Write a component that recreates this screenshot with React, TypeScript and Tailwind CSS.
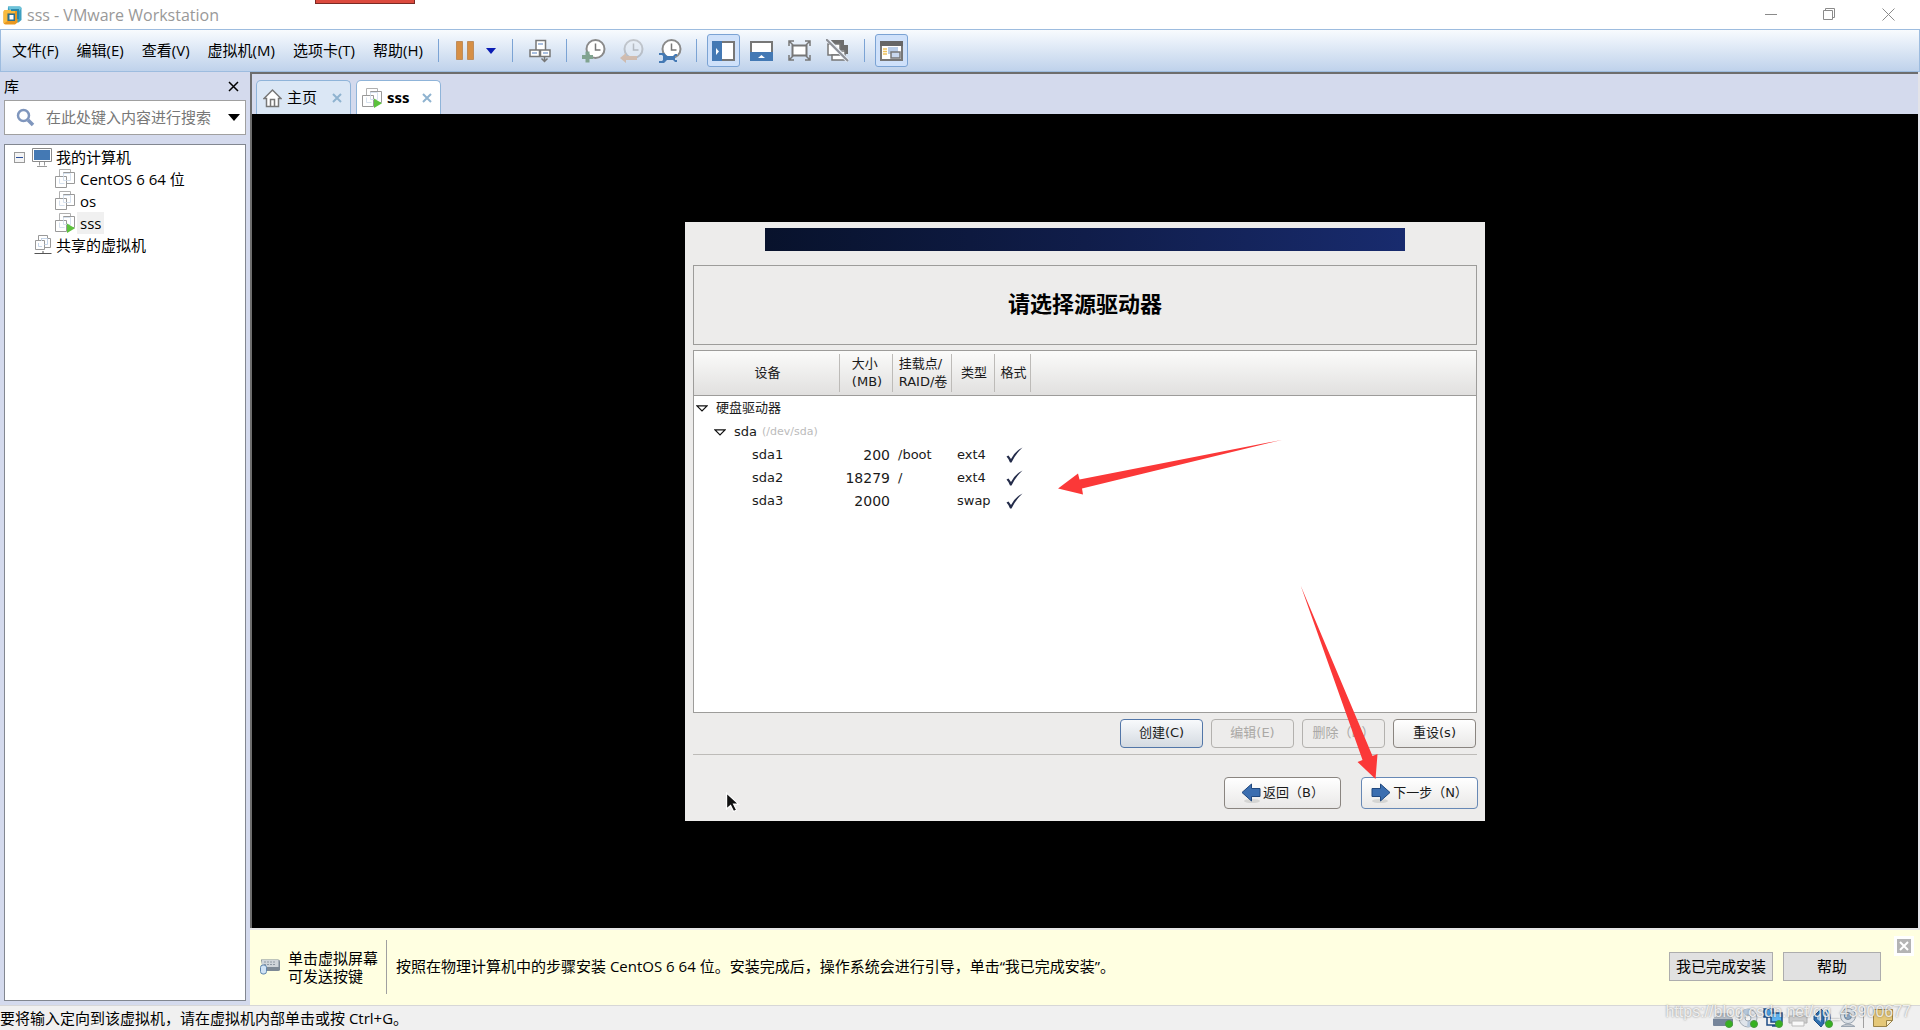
import type { ReactNode } from "react"
import clsx from "clsx"

/* ------------------------------------------------------------------ */
/*  Data                                                                */
/* ------------------------------------------------------------------ */

const menus = ["文件(F)", "编辑(E)", "查看(V)", "虚拟机(M)", "选项卡(T)", "帮助(H)"]

type Partition = { name: string; size: string; mount: string; type: string }

const partitions: Partition[] = [
  { name: "sda1", size: "200", mount: "/boot", type: "ext4" },
  { name: "sda2", size: "18279", mount: "/", type: "ext4" },
  { name: "sda3", size: "2000", mount: "", type: "swap" },
]

/* ------------------------------------------------------------------ */
/*  Window icons                                                        */
/* ------------------------------------------------------------------ */

function AppLogo() {
  return (
    <svg width="19" height="20" viewBox="0 0 19 20" aria-hidden="true">
      <path d="M5 1.500h11.500q2 0 2 2V15l-3 2.500H8L4.500 14z" fill="#3d9fc0" />
      <path d="M5 1.500h11.500q2 0 2 2L16 6H7z" fill="#6cc3da" />
      <path d="M2.500 5H13q1.500 0 1.500 1.500V17.500L12 19.500H2.500Q.5 19.500.5 17.500V7q0-2 2-2z" fill="#e9971f" />
      <path d="M2.500 5H12v3.500H4.500V16L1 18.500q-.5-.5-.5-1V7q0-2 2-2z" fill="#f9bb3f" />
      <path d="M4.500 8.500h7.500v7.500H4.500z" fill="#2d6f8e" />
      <path d="M6.500 10h4v4.500h-4z" fill="#fff" />
      <path d="M8 4h8v10h-2V6H8z" fill="#2b87ab" />
    </svg>
  )
}

function VmIcon({ running = false }: { running?: boolean }) {
  return (
    <svg width="21" height="20" viewBox="0 0 21 20" aria-hidden="true">
      <g fill="#fff" strokeWidth="1">
        <path d="M4.500.5h11v11h-11z" stroke="#b0b0b0" />
        <path d="M8.500 3.500h11v11h-11z" stroke="#999" />
        <path d="M.5 7.500h11v11H.5z" stroke="#999" />
      </g>
      <path d="M8.500 7.500v-3h7v7h-4M4.500 9.500v5h5M8.500 7.500v4h3" fill="none" stroke="#d6e1ee" />
      {running && <path d="M12 10.500v9.500l8-4.700z" fill="#5cc23c" />}
    </svg>
  )
}

function SharedIcon() {
  return (
    <svg width="18" height="20" viewBox="0 0 18 20" aria-hidden="true">
      <g fill="#fff" stroke="#999">
        <path d="M4.500.5h9v9h-9z" />
        <path d="M7.500 3.500h9v9h-9z" />
        <path d="M1.500 5.500h9v9h-9z" />
      </g>
      <path d="M7.500 6V3.500h6v6h-3M4.500 8v3.500H8" fill="none" stroke="#c6d6ea" />
      <path d="M.5 18.500h17M9 16v2.500" stroke="#555" />
    </svg>
  )
}

function ComputerIcon() {
  return (
    <svg width="20" height="19" viewBox="0 0 20 19" aria-hidden="true">
      <path d="M.5.5h19v13H.5z" fill="#fff" stroke="#8a8a8a" />
      <path d="M2 2h16v10H2z" fill="#4479b4" />
      <path d="M7.500 14v3.500M12.500 14v3.500M5 18.500h10" stroke="#999" fill="none" />
    </svg>
  )
}

function HomeIcon() {
  return (
    <svg width="19" height="20" viewBox="0 0 19 20" aria-hidden="true">
      <path d="M1 10.500 9.500 2l8.500 8.500h-2.500V18.500h-12V10.500z" fill="#fff" stroke="#777" strokeWidth="1.500" />
      <path d="M7.500 18v-6.500h4V18" fill="none" stroke="#777" strokeWidth="1.500" />
    </svg>
  )
}

function Clock({ children, faded = false }: { children: ReactNode; faded?: boolean }) {
  return (
    <svg width="24" height="24" viewBox="0 0 24 24" aria-hidden="true" opacity={faded ? 0.4 : 1}>
      <circle cx="13.500" cy="10" r="9" fill={faded ? "#e8edf3" : "#fff"} stroke="#8a8a8a" strokeWidth="2" />
      <path d="M13.500 4.500v6.500h5" fill="none" stroke="#777" strokeWidth="1.500" />
      {children}
    </svg>
  )
}

function PauseIcon() {
  return (
    <svg width="18" height="20" viewBox="0 0 18 20" aria-hidden="true">
      <path d="M.5.5h6v18h-6zM11.500.5h6v18h-6z" fill="#d68f45" stroke="#bf8d5c" />
    </svg>
  )
}

function SendKeysIcon() {
  return (
    <svg width="22" height="24" viewBox="0 0 22 24" aria-hidden="true">
      <g fill="#fff" stroke="#777" strokeWidth="1.500">
        <path d="M7 1.500h9.500V11H7zM1 11h9.500v6.500H1zM11.500 11H21v6.500h-9.500z" />
      </g>
      <path d="M9 5h5M3 14h5M14 14h5" stroke="#a9bfe0" strokeWidth="2" />
      <path d="M15.500 17.500v5M12.500 19.500l3 3 3-3" fill="none" stroke="#777" strokeWidth="1.500" />
    </svg>
  )
}

function LibraryViewIcon() {
  return (
    <svg width="23" height="20" viewBox="0 0 23 20" aria-hidden="true">
      <path d="M1 1h21v18H1z" fill="#fff" stroke="#777" strokeWidth="2" />
      <path d="M0 0h10v20H0z" fill="#4479b4" />
      <path d="M4 7v7l3-3.500z" fill="#fff" />
    </svg>
  )
}

function ThumbnailViewIcon() {
  return (
    <svg width="23" height="20" viewBox="0 0 23 20" aria-hidden="true">
      <path d="M1 1h21v18H1z" fill="#fff" stroke="#777" strokeWidth="2" />
      <path d="M0 11h23v9H0z" fill="#4479b4" />
      <path d="M8 17h7l-3.500-3z" fill="#fff" />
    </svg>
  )
}

function FullscreenIcon() {
  return (
    <svg width="23" height="21" viewBox="0 0 23 21" aria-hidden="true">
      <path d="M4.500 5.500h14v10h-14z" fill="#fff" stroke="#777" strokeWidth="2" />
      <path
        d="M1 6V1h5M1 1l4 4M17 1h5v5M22 1l-4 4M1 15v5h5M1 20l4-4M22 15v5h-5M22 20l-4-4"
        fill="none"
        stroke="#777"
        strokeWidth="1.500"
      />
    </svg>
  )
}

function UnityIcon() {
  return (
    <svg width="23" height="23" viewBox="0 0 23 23" aria-hidden="true">
      <path d="M5 1h13v5h4v9h-4v-4H5z" fill="#6d6d6d" />
      <path d="M2 5h12v11H2z" fill="#fff" stroke="#777" strokeWidth="1.500" />
      <path d="M6 16v5h13v-9h-4v4z" fill="#fff" stroke="#777" strokeWidth="1.500" />
      <path d="M1 0 22 22" stroke="#e8eef6" strokeWidth="4" />
      <path d="M0 0 22 22" stroke="#8c8f96" strokeWidth="2" />
    </svg>
  )
}

function ConsoleIcon() {
  return (
    <svg width="23" height="20" viewBox="0 0 23 20" aria-hidden="true">
      <path d="M1 1h21v18H1z" fill="#fff" stroke="#777" strokeWidth="2" />
      <path d="M0 0h23v5H0z" fill="#666" />
      <path d="M3 8h4M3 10.500h4M3 13h4" stroke="#efc25c" strokeWidth="1.500" />
      <path d="M8 6h10v7H8z" fill="#b9cde8" />
      <path d="M11 11h9v6h-9z" fill="#c9d8ee" stroke="#777" strokeWidth="1.500" />
    </svg>
  )
}

function CloseGlyph({ className }: { className: string }) {
  return (
    <svg width="10" height="10" viewBox="0 0 10 10" className={className} aria-hidden="true">
      <path d="m1 1 8 8M9 1 1 9" stroke="currentColor" strokeWidth="2" fill="none" />
    </svg>
  )
}

function KeyboardIcon() {
  return (
    <svg width="21" height="17" viewBox="0 0 21 17" aria-hidden="true">
      <path d="M1 1.500h17q2 0 2 2v8q0 1.500-2 1.500H3z" fill="#7d8995" />
      <path d="M2 2h16.500v7H2z" fill="#cfd5da" />
      <path d="M4 4h12M4 6.500h12" stroke="#8f99a3" strokeDasharray="2 1" />
      <rect x=".5" y="7" width="6" height="9" rx="2.500" fill="#cfe2f5" stroke="#5f86ad" />
    </svg>
  )
}

/* ------------------------------------------------------------------ */
/*  Title bar, menus and toolbar                                        */
/* ------------------------------------------------------------------ */

function TitleBar() {
  return (
    <header className="relative flex h-[29px] items-center bg-white pl-[3px]">
      <AppLogo />
      <h1 className="pl-[5px] text-[16px]/[20px] text-[#999]">sss - VMware Workstation</h1>
      <div className="absolute left-[315px] top-0 h-1 w-[100px] border border-t-0 border-[#7b2a24] bg-[#dc4a3e]" />
      <div className="ml-auto flex text-[#8a8a8a]">
        <button type="button" aria-label="最小化" className="flex h-7 w-[62px] items-center justify-center">
          <svg width="12" height="12" aria-hidden="true">
            <path d="M0 5.500h12" stroke="currentColor" />
          </svg>
        </button>
        <button type="button" aria-label="还原" className="flex h-7 w-[54px] items-center justify-center">
          <svg width="13" height="13" fill="none" aria-hidden="true">
            <path d="M.5 2.500h9v9h-9zM2.500 2.500v-2h9v9h-2" stroke="currentColor" />
          </svg>
        </button>
        <button type="button" aria-label="关闭" className="flex h-7 w-[64px] items-center justify-center">
          <svg width="13" height="13" aria-hidden="true">
            <path d="m.5.5 12 12M12.500.5l-12 12" stroke="currentColor" />
          </svg>
        </button>
      </div>
    </header>
  )
}

function Separator() {
  return <span className="h-[23px] w-px shrink-0 bg-[#7ba3d4]" />
}

function ToolButton({ label, pressed = false, children }: { label: string; pressed?: boolean; children: ReactNode }) {
  return (
    <button
      type="button"
      aria-label={label}
      aria-pressed={pressed}
      className={clsx(
        "flex h-[33px] w-[33px] shrink-0 items-center justify-center rounded-[3px]",
        pressed && "border border-[#7ba3d4] bg-[#cfe1fa]",
      )}
    >
      {children}
    </button>
  )
}

function Toolbar() {
  return (
    <div className="flex h-[43px] items-center border border-[#9dbcdf] bg-linear-to-b from-[#f8fbfe] to-[#bfd2eb]">
      <nav className="flex w-[437px] shrink-0 gap-[18px] pl-[11px]">
        {menus.map((m) => (
          <button key={m} type="button" className="shrink-0 text-[15px] whitespace-nowrap">
            {m}
          </button>
        ))}
      </nav>
      <Separator />
      <div className="flex w-[73px] items-center justify-end gap-3 pr-4">
        <button type="button" aria-label="挂起">
          <PauseIcon />
        </button>
        <button type="button" aria-label="电源选项">
          <svg width="10" height="6" aria-hidden="true">
            <path d="M0 0h10L5 6z" fill="#0a1cb4" />
          </svg>
        </button>
      </div>
      <Separator />
      <div className="flex w-[53px] justify-center">
        <ToolButton label="发送 Ctrl+Alt+Del">
          <SendKeysIcon />
        </ToolButton>
      </div>
      <Separator />
      <div className="flex w-[129px] items-center justify-center gap-[5px]">
        <ToolButton label="拍摄快照">
          <Clock>
            <path d="M5.500 12.500v11M0 18h11" stroke="#80a390" strokeWidth="4" />
          </Clock>
        </ToolButton>
        <ToolButton label="恢复快照">
          <Clock faded>
            <path d="M0 19l6-5v3h11v4H6v3z" fill="#d08a50" />
          </Clock>
        </ToolButton>
        <ToolButton label="管理快照">
          <Clock>
            <path d="M1 14h5l3 3h6l2-2h2v2h-2v4h2v2h-2l-2-2H9l-3 3H1v-2h3l1-1v-4l-1-1H1z" fill="#4479b4" />
          </Clock>
        </ToolButton>
      </div>
      <Separator />
      <div className="flex w-[167px] items-center justify-center gap-[5px]">
        <ToolButton label="显示库" pressed>
          <LibraryViewIcon />
        </ToolButton>
        <ToolButton label="显示缩略图栏">
          <ThumbnailViewIcon />
        </ToolButton>
        <ToolButton label="全屏">
          <FullscreenIcon />
        </ToolButton>
        <ToolButton label="Unity">
          <UnityIcon />
        </ToolButton>
      </div>
      <Separator />
      <div className="pl-2.5">
        <ToolButton label="控制台视图" pressed>
          <ConsoleIcon />
        </ToolButton>
      </div>
    </div>
  )
}

/* ------------------------------------------------------------------ */
/*  Library sidebar                                                     */
/* ------------------------------------------------------------------ */

function Library() {
  return (
    <aside className="flex w-[250px] shrink-0 flex-col pb-1 pl-1 pr-1">
      <div className="flex h-7 items-center justify-between pr-[7px]">
        <h2 className="text-[15px]">库</h2>
        <button type="button" aria-label="关闭库">
          <svg width="11" height="11" aria-hidden="true">
            <path d="m1 1 9 9M10 1l-9 9" stroke="#000" strokeWidth="1.500" />
          </svg>
        </button>
      </div>
      <div className="flex h-[35px] items-center border border-[#a0a0a0] bg-white pl-[11px] pr-[5px]">
        <svg width="19" height="19" viewBox="0 0 19 19" aria-hidden="true">
          <circle cx="7.500" cy="7.500" r="5.500" fill="none" stroke="#7f96bd" strokeWidth="2.500" />
          <path d="m12 12 5 5" stroke="#7f96bd" strokeWidth="3.500" />
        </svg>
        <input
          type="search"
          aria-label="搜索库"
          placeholder="在此处键入内容进行搜索"
          className="min-w-0 flex-1 pl-[11px] text-[15px] outline-none placeholder:text-[#777]"
        />
        <button type="button" aria-label="搜索选项">
          <svg width="12" height="7" aria-hidden="true">
            <path d="M0 0h12L6 7z" />
          </svg>
        </button>
      </div>
      <ul className="mt-[9px] flex-1 border border-[#828790] bg-white py-px text-[15px] leading-[22px]">
        <li>
          <div className="flex items-center pl-[9px]">
            <button
              type="button"
              aria-label="折叠"
              className="mr-[7px] flex h-[11px] w-[11px] items-center justify-center border border-[#999] bg-[#f4f4f4]"
            >
              <span className="h-px w-[7px] bg-[#2b4f9c]" />
            </button>
            <ComputerIcon />
            <span className="pl-1">我的计算机</span>
          </div>
          <ul>
            {["CentOS 6 64 位", "os", "sss"].map((name) => (
              <li key={name} className="flex items-center pl-[50px]">
                <VmIcon running={name === "sss"} />
                <span className={clsx("ml-px px-[3px]", name === "sss" && "bg-[#f0f0f0]")}>{name}</span>
              </li>
            ))}
          </ul>
        </li>
        <li className="flex items-center pl-[29px]">
          <SharedIcon />
          <span className="pl-1">共享的虚拟机</span>
        </li>
      </ul>
    </aside>
  )
}

/* ------------------------------------------------------------------ */
/*  Installer running inside the VM                                     */
/* ------------------------------------------------------------------ */

function Expander() {
  return (
    <svg width="12" height="7" viewBox="0 0 12 7" className="shrink-0" aria-hidden="true">
      <path d="M1 .8h10L6 6z" fill="#fff" stroke="#111" strokeWidth="1.200" />
    </svg>
  )
}

function Check() {
  return (
    <svg width="17" height="16" viewBox="0 0 17 16" aria-hidden="true">
      <path d="M.5 9.500 2.500 8.500 5 12Q9 4 16.500.5 9.500 7 5.500 15.500H4Q2.500 11.500.5 9.500z" fill="#242c4a" />
    </svg>
  )
}

function NavArrow({ back = false }: { back?: boolean }) {
  return (
    <svg width="20" height="20" viewBox="0 0 20 20" className={clsx(back && "-scale-x-100")} aria-hidden="true">
      <ellipse cx="9" cy="18" rx="8" ry="2" fill="#d5d5d3" />
      <path d="M1 5.500h8.500V1L19 9.500 9.500 18v-4.500H1z" fill="#3b6eb0" stroke="#20487e" />
    </svg>
  )
}

function GtkButton({ tone = "plain", children }: { tone?: "plain" | "focus" | "off"; children: ReactNode }) {
  return (
    <button
      type="button"
      disabled={tone === "off"}
      className={clsx(
        "h-[29px] w-[83px] rounded-[4px] border whitespace-nowrap",
        tone === "plain" && "border-[#8a8580] bg-linear-to-b from-white to-[#e9e8e7]",
        tone === "focus" && "border-[#5276a8] bg-linear-to-b from-[#f8fafc] to-[#d4dae1]",
        tone === "off" && "border-[#b3b1ae] bg-[#edeceb] text-[#aaa8a5]",
      )}
    >
      {children}
    </button>
  )
}

function HeaderCell({ children, className }: { children: ReactNode; className: string }) {
  return (
    <th scope="col" className={clsx("h-[45px] p-0 font-normal", className)}>
      <div className="flex h-[38px] items-center justify-center border-r border-[#bdbbb8] pl-0.5 text-left leading-[18px]">
        {children}
      </div>
    </th>
  )
}

function PartitionTable() {
  return (
    <div className="mt-[5px] h-[363px] border border-[#9d9c9a] bg-white">
      <table className="w-full table-fixed border-collapse">
        <thead className="border-b border-[#9d9c9a] bg-linear-to-b from-[#fbfbfa] to-[#e1e0df]">
          <tr>
            <HeaderCell className="w-[146px]">设备</HeaderCell>
            <HeaderCell className="w-[53px]">
              大小
              <br />
              (MB)
            </HeaderCell>
            <HeaderCell className="w-[59px]">
              挂载点/
              <br />
              RAID/卷
            </HeaderCell>
            <HeaderCell className="w-[43px]">类型</HeaderCell>
            <HeaderCell className="w-[36px]">格式</HeaderCell>
            <td />
          </tr>
        </thead>
        <tbody>
          <tr className="h-[25px]">
            <td colSpan={6} className="p-0">
              <div className="flex items-center gap-2 pl-0.5">
                <Expander />
                硬盘驱动器
              </div>
            </td>
          </tr>
          <tr className="h-[23px]">
            <td colSpan={6} className="p-0">
              <div className="flex items-center pl-5">
                <Expander />
                <span className="pl-2">sda</span>
                <span className="pl-[5px] text-[11px] text-[#bbb]">(/dev/sda)</span>
              </div>
            </td>
          </tr>
          {partitions.map((p) => (
            <tr key={p.name} className="h-[23px]">
              <td className="p-0 pl-[58px]">{p.name}</td>
              <td className="p-0 pr-[3px] text-right text-[14px] leading-5">{p.size}</td>
              <td className="p-0 pl-[5px]">{p.mount}</td>
              <td className="p-0 pl-[5px]">{p.type}</td>
              <td className="p-0 pl-[11px]">
                <Check />
              </td>
              <td />
            </tr>
          ))}
        </tbody>
      </table>
    </div>
  )
}

/* Red pointer arrows and the guest cursor, over the installer */
function Annotations() {
  return (
    <svg viewBox="0 0 800 600" className="pointer-events-none absolute inset-0 h-full w-full" aria-hidden="true">
      <path d="M373 267 393 252 394.500 258 598 218 397 267 398 273z" fill="#fb3838" />
      <path d="M616 364 688 535 693 533 691 558 673 541 678 539z" fill="#fb3838" />
      <path
        d="M41 572v16l4-3.500 3 6 3-1.500-3-6h5z"
        fill="#111"
        stroke="#fff"
        strokeWidth="1.200"
      />
    </svg>
  )
}

function Installer() {
  return (
    <section className="relative w-[800px] bg-[#edeceb] px-2 pt-1.5 pb-3 font-['DejaVu_Sans','Noto_Sans_CJK_SC',sans-serif] text-[13px] leading-5 text-[#1a1a1a]">
      <div className="mx-auto h-[23px] w-[640px] bg-linear-to-r from-[#08122c] via-[#101d4a] to-[#182b6e]" />
      <div className="mt-3.5 flex h-[80px] items-center justify-center border border-[#9d9c9a]">
        <h2 className="text-[22px] font-bold text-black">请选择源驱动器</h2>
      </div>
      <PartitionTable />
      <div className="mt-1.5 flex justify-end gap-2 border-b border-[#bdbbb8] pb-1.5 pr-px">
        <GtkButton tone="focus">创建(C)</GtkButton>
        <GtkButton tone="off">编辑(E)</GtkButton>
        <GtkButton tone="off">删除（D）</GtkButton>
        <GtkButton>重设(s)</GtkButton>
      </div>
      <div className="mt-[22px] -mr-px flex justify-end gap-5">
        <button
          type="button"
          className="flex h-8 w-[117px] items-center justify-center gap-0.5 rounded-[4px] border border-[#8a8580] bg-linear-to-b from-white to-[#e9e8e7] whitespace-nowrap"
        >
          <NavArrow back />
          返回（B）
        </button>
        <button
          type="button"
          className="flex h-8 w-[117px] items-center justify-center gap-0.5 rounded-[4px] border border-[#6788b5] bg-linear-to-b from-white to-[#e9e8e7] whitespace-nowrap"
        >
          <NavArrow />
          下一步（N）
        </button>
      </div>
      <Annotations />
    </section>
  )
}

/* ------------------------------------------------------------------ */
/*  Tabs, hint bar and status bar                                       */
/* ------------------------------------------------------------------ */

function Tabs() {
  return (
    <div className="flex h-[42px] items-end gap-[5px] border-t-2 border-[#6d6d6d] pl-1">
      <div className="flex h-[34px] w-[95px] items-center rounded-t-[5px] border border-b-0 border-[#8fb4d9] bg-[#dbe7f5] pl-1.5 pr-2">
        <HomeIcon />
        <button type="button" className="pl-[5px] text-[15px]">
          主页
        </button>
        <button type="button" aria-label="关闭主页" className="ml-auto">
          <CloseGlyph className="text-[#8fb3d0]" />
        </button>
      </div>
      <div className="flex h-[34px] w-[85px] items-center rounded-t-[5px] border border-b-0 border-[#8fb4d9] bg-white pl-[5px] pr-2">
        <VmIcon running />
        <button type="button" className="pl-1 text-[15px] font-bold">
          sss
        </button>
        <button type="button" aria-label="关闭 sss" className="ml-auto">
          <CloseGlyph className="text-[#8fb3d0]" />
        </button>
      </div>
    </div>
  )
}

function HintBar() {
  return (
    <div className="relative flex h-[77px] items-center border-t-2 border-[#e6e6e6] bg-[#ffffe1] pb-0.5 pl-2.5 pr-[39px] text-[15px]">
      <KeyboardIcon />
      <p className="pl-[7px] leading-[18px]">
        单击虚拟屏幕
        <br />
        可发送按键
      </p>
      <span className="ml-2 h-[54px] w-px bg-[#a0a0a0]" />
      <p className="pl-[9px]">
        按照在物理计算机中的步骤安装 CentOS 6 64 位。安装完成后，操作系统会进行引导，单击“我已完成安装”。
      </p>
      <div className="ml-auto flex gap-2.5">
        <button type="button" className="h-[29px] w-[104px] border border-[#adadad] bg-[#e1e1e1]">
          我已完成安装
        </button>
        <button type="button" className="h-[29px] w-[98px] border border-[#adadad] bg-[#e1e1e1]">
          帮助
        </button>
      </div>
      <button
        type="button"
        aria-label="关闭提示"
        className="absolute right-1.5 top-1.5 flex h-5 w-5 items-center justify-center border-[3px] border-white bg-[#b4b4b4]"
      >
        <CloseGlyph className="text-white" />
      </button>
    </div>
  )
}

function Dot() {
  return <circle cx="16" cy="16" r="3.500" fill="#35b21f" stroke="#4a9a3f" />
}

function DeviceIcons() {
  return (
    <div className="flex items-center gap-[5px]">
      <svg width="20" height="20" viewBox="0 0 20 20" aria-hidden="true">
        <path d="M4 5h12l4 6H0z" fill="#b9c0c8" />
        <path d="M0 11h20v6q0 1-1 1H1q-1 0-1-1z" fill="#76859a" />
        <Dot />
      </svg>
      <svg width="20" height="20" viewBox="0 0 20 20" aria-hidden="true">
        <circle cx="10" cy="10" r="9" fill="#dfe4ea" stroke="#a3acb6" />
        <path d="M10 10 4 3a9 9 0 0 1 7-2zM10 10l6 7a9 9 0 0 1-7 2z" fill="#b5c7da" />
        <circle cx="10" cy="10" r="3" fill="#f5f5f5" stroke="#99a3ad" />
        <Dot />
      </svg>
      <svg width="20" height="20" viewBox="0 0 20 20" aria-hidden="true">
        <path d="M1 1h9v8H1z" fill="#4ba3e8" stroke="#1e4c86" strokeWidth="1.500" />
        <path d="M8 5h11v9H8z" fill="#5fb4f2" stroke="#1e4c86" strokeWidth="1.500" />
        <path d="M4 9v8h8M13 14v4M9 18h8" fill="none" stroke="#1e4c86" strokeWidth="1.500" />
        <Dot />
      </svg>
      <svg width="20" height="20" viewBox="0 0 20 20" opacity=".6" aria-hidden="true">
        <path d="M5 2h10v6H5z" fill="#fff" stroke="#999" />
        <path d="M1 8h18v7H1z" fill="#b5b5b5" stroke="#888" />
        <path d="M4 13h12v5H4z" fill="#fff" stroke="#999" />
      </svg>
      <svg width="20" height="20" viewBox="0 0 20 20" aria-hidden="true">
        <path d="M1 8 8 1l3 3v11l-3 4-7-7z" fill="#2f6fae" stroke="#1f4f86" />
        <path d="M4 8l4-3v9l-4-3z" fill="#a9cdee" />
        <path d="M12 4q4 6 0 12M14 2q6 7 1 15" fill="none" stroke="#3d7fbe" strokeWidth="1.500" />
        <Dot />
      </svg>
      <svg width="20" height="20" viewBox="0 0 20 20" aria-hidden="true">
        <circle cx="10" cy="8" r="7.500" fill="#dde2e7" stroke="#9aa5b1" />
        <circle cx="10" cy="8" r="3.500" fill="#8fa9c4" stroke="#73879c" />
        <path d="M3 18.500q7-5 14 0z" fill="#c2c8ce" stroke="#9aa5b1" />
      </svg>
      <span className="h-5 w-px bg-[#a0a0a0]" />
      <svg width="20" height="20" viewBox="0 0 20 20" className="ml-1" aria-hidden="true">
        <path d="M.5 1.500h19v11l-6 6H.5z" fill="#e5c878" stroke="#9a8347" />
        <path d="M19.500 12.500h-6v6z" fill="#fbf0cc" stroke="#9a8347" />
      </svg>
    </div>
  )
}

function StatusBar() {
  return (
    <footer className="relative flex h-[25px] items-center justify-between border-t border-[#d7d7d7] bg-[#f0f0f0] pr-[27px]">
      <p className="text-[15px]">要将输入定向到该虚拟机，请在虚拟机内部单击或按 Ctrl+G。</p>
      <DeviceIcons />
      <span className="absolute -top-1 right-[9px] font-['Liberation_Sans',sans-serif] text-[16px] leading-5 text-white/80 [text-shadow:0_0_2px_rgba(0,0,0,0.5)]">
        https://blog.csdn.net/qq_43900677
      </span>
    </footer>
  )
}

export default function App() {
  return (
    <div className="flex min-h-screen flex-col bg-[#d4daed] font-['Open_Sans','Noto_Sans_CJK_SC',sans-serif] text-black">
      <TitleBar />
      <Toolbar />
      <div className="flex flex-1">
        <Library />
        <main className="flex min-w-0 flex-1 flex-col">
          <div className="flex flex-1 flex-col border-l-2 border-r-2 border-l-[#6d6d6d] border-r-[#e3e3e8]">
            <Tabs />
            <div className="flex flex-1 items-center justify-center bg-black">
              <Installer />
            </div>
          </div>
          <HintBar />
        </main>
      </div>
      <StatusBar />
    </div>
  )
}
